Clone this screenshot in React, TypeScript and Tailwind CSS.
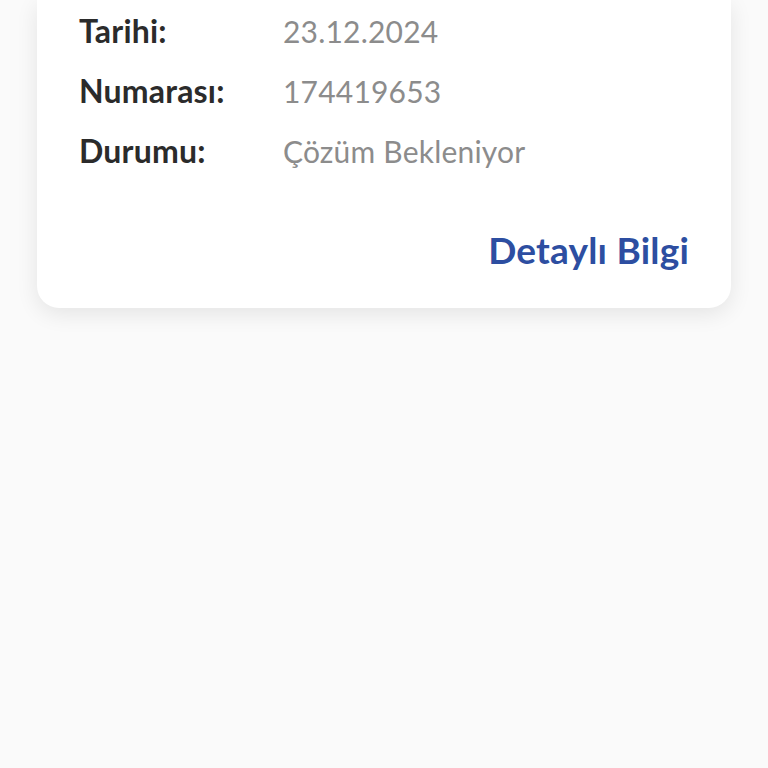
export default function App() {
  const rows = [
    { label: "Tarihi:", value: "23.12.2024" },
    { label: "Numarası:", value: "174419653" },
    { label: "Durumu:", value: "Çözüm Bekleniyor" },
  ];

  return (
    <div className="min-h-screen w-full bg-[#fafafa] px-[37px] font-['Lato',sans-serif]">
      <div className="rounded-b-[22px] bg-white pl-[42px] pr-[42px] pb-[40px] shadow-[0_6px_22px_rgba(0,0,0,0.09)]">
        <div className="flex flex-col pt-px">
          {rows.map((r) => (
            <div key={r.label} className="flex h-[60px] items-center">
              <span className="w-[204px] text-[32px] font-bold tracking-[0.2px] text-[#2b2b2b]">{r.label}</span>
              <span className="text-[30px] tracking-[0.2px] text-[#8c8c8c]">{r.value}</span>
            </div>
          ))}
        </div>
        <div className="mt-[50px] flex justify-end">
          <button className="text-[37px] font-bold leading-none tracking-[0.2px] text-[#2d4ea1]">Detaylı Bilgi</button>
        </div>
      </div>
    </div>
  );
}
